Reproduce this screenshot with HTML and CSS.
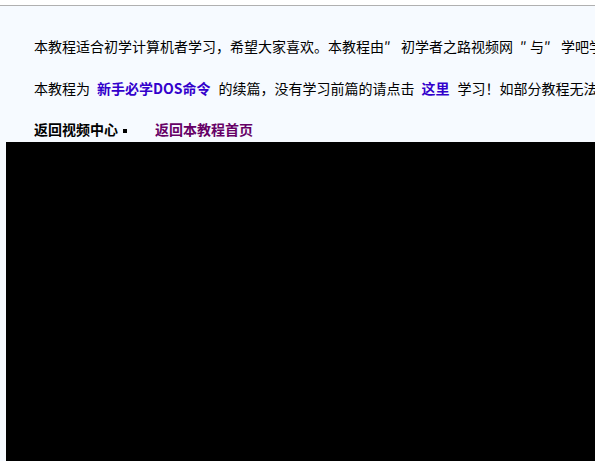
FILE: index.html
```html
<!DOCTYPE html>
<html lang="zh-CN">
<head>
<meta charset="utf-8">
<title>教程</title>
<link rel="stylesheet" href="styles.css">
</head>
<body>
<div class="page">
  <div class="intro">
    <p class="row">本教程适合初学计算机者学习，希望大家喜欢。本教程由<span class="q">″</span>初学者之路视频网<span class="q q-l">″</span>与<span class="q">″</span>学吧学吧网站联合制作。</p>
    <p class="row">本教程为<a class="link-blue" href="#">新手必学DOS命令</a>的续篇，没有学习前篇的请点击<a class="link-blue" href="#">这里</a>学习！如部分教程无法播放，请下载安装播放器。</p>
    <p class="row row-nav"><a class="link-black" href="#">返回视频中心</a><span class="sep"></span><a class="link-purple" href="#">返回本教程首页</a></p>
  </div>
  <div class="player"></div>
</div>
</body>
</html>
```

FILE: styles.css
```css
html, body {
  margin: 0;
  padding: 0;
  background: #ffffff;
  overflow: hidden;
  width: 595px;
  height: 461px;
}

.page {
  margin-top: 5px;
  border-top: 1px solid #b0b0b0;
  background: #f6faff;
  padding-left: 6px;
  height: 455px;
  font-family: "SimSun", "Noto Sans CJK SC", sans-serif;
  font-size: 14px;
  color: #000000;
}

.intro {
  padding-top: 19px;
  padding-left: 28px;
}

.row {
  margin: 0;
  line-height: 42px;
  white-space: nowrap;
}

.row-nav {
  padding-top: 8px;
  line-height: 25px;
  font-weight: bold;
}

.q {
  display: inline-block;
  width: 10px;
  margin-right: 7px;
  text-align: left;
}

.q-l {
  margin-right: 0;
  margin-left: 7px;
}

.link-blue {
  color: #3300cc;
  font-weight: bold;
  text-decoration: none;
  margin: 0 8px 0 7px;
}

.link-black {
  color: #000000;
  text-decoration: none;
}

.link-purple {
  color: #660066;
  text-decoration: none;
}

.sep {
  display: inline-block;
  width: 4px;
  height: 4px;
  background: #000000;
  margin: 0 28px 0 5px;
  vertical-align: middle;
}

.player {
  width: 620px;
  height: 330px;
  background: #000000;
}
```
